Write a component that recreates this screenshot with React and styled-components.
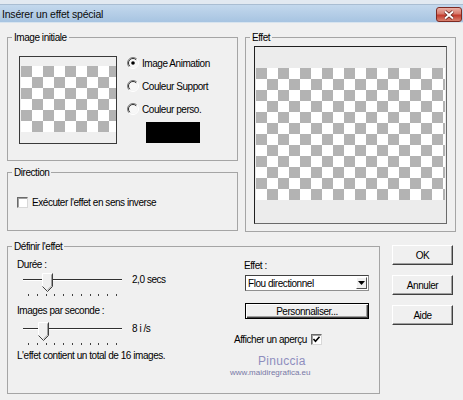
import React from 'react'
import styled, { createGlobalStyle } from 'styled-components'

const GlobalStyle = createGlobalStyle`
html, body {
    margin:0;
    padding:0;
    background:#f0f0f0;
}
body {
    font-family:"Liberation Sans", Arial, sans-serif;
    font-size:10px;
    letter-spacing:-0.45px;
    color:#000;
}
`

function Radio({ checked }) {
    return (
        <svg width="12" height="12" viewBox="0 0 12 12">
            <circle cx="6" cy="6" r="4.5" fill="#f7f7f7" />
            <path d="M9.9 2.1 A5.5 5.5 0 0 0 2.1 9.9" stroke="#808080" fill="none" />
            <path d="M9.2 2.8 A4.5 4.5 0 0 0 2.8 9.2" stroke="#303030" fill="none" />
            <path d="M9.9 2.1 A5.5 5.5 0 0 1 2.1 9.9" stroke="#ffffff" fill="none" />
            {checked && <circle cx="6" cy="6" r="1.8" fill="#000" />}
        </svg>
    )
}

function CheckBox({ checked }) {
    return (
        <Box>
            {checked && (
                <svg width="9" height="9" viewBox="0 0 9 9">
                    <path d="M1.5 4 L3.5 6.2 L7.5 1.8" stroke="#000" strokeWidth="1.6" fill="none" />
                </svg>
            )}
        </Box>
    )
}

function Slider({ pos }) {
    return (
        <SliderBox>
            <Track />
            <Thumb style={{ left: pos }}>
                <svg width="11" height="19" viewBox="0 0 11 19">
                    <path d="M0.5 0.5 H10.5 V13.5 L5.5 18.5 L0.5 13.5 Z" fill="#f0f0f0" />
                    <path d="M0.5 13.5 V0.5 H10" stroke="#ffffff" fill="none" />
                    <path d="M10.5 0.5 V13.5 L5.5 18.5 L0.5 13.5" stroke="#404040" fill="none" />
                    <path d="M9.5 1.5 V13 L5.5 17" stroke="#a0a0a0" fill="none" />
                </svg>
            </Thumb>
            <Ticks>
                {Array.from({ length: 11 }).map((_, i) => <Tick key={i} />)}
            </Ticks>
        </SliderBox>
    )
}

export default function App() {
    return (
        <>
            <GlobalStyle />
            <Window>
                <TitleBar>
                    <Title>Insérer un effet spécial</Title>
                    <CloseBtn>
                        <svg width="12" height="10" viewBox="0 0 12 10">
                            <path d="M2 1.5 L10 8.5 M10 1.5 L2 8.5" stroke="#5a1a14" strokeWidth="3.4" />
                            <path d="M2 1.5 L10 8.5 M10 1.5 L2 8.5" stroke="#ffffff" strokeWidth="2" />
                        </svg>
                    </CloseBtn>
                </TitleBar>
                <Body>
                    <TopRow>
                        <LeftCol>
                            <Group>
                                <Legend>Image initiale</Legend>
                                <ImageContent>
                                    <SmallPreview>
                                        <Checker $h={66} />
                                    </SmallPreview>
                                    <RadioCol>
                                        <RadioRow><Radio checked />Image Animation</RadioRow>
                                        <RadioRow><Radio />Couleur Support</RadioRow>
                                        <RadioRow><Radio />Couleur perso.</RadioRow>
                                        <Swatch />
                                    </RadioCol>
                                </ImageContent>
                            </Group>
                            <Group>
                                <Legend>Direction</Legend>
                                <DirectionContent>
                                    <CheckRow><CheckBox />Exécuter l'effet en sens inverse</CheckRow>
                                </DirectionContent>
                            </Group>
                        </LeftCol>
                        <Group>
                            <Legend>Effet</Legend>
                            <EffectContent>
                                <BigPreview>
                                    <Checker $h={132} />
                                </BigPreview>
                            </EffectContent>
                        </Group>
                    </TopRow>
                    <BottomRow>
                        <Group>
                            <Legend>Définir l'effet</Legend>
                            <DefineContent>
                                <LeftPane>
                                    <Label $top={5}>Durée :</Label>
                                    <SliderRow $top={1}>
                                        <Slider pos={19} />
                                        <Value>2,0 secs</Value>
                                    </SliderRow>
                                    <Label $top={8}>Images par seconde :</Label>
                                    <SliderRow $top={4}>
                                        <Slider pos={15} />
                                        <Value>8 i /s</Value>
                                    </SliderRow>
                                    <Label $top={4}>L'effet contient un total de 16 images.</Label>
                                </LeftPane>
                                <RightPane>
                                    <Label $top={6} $left={10}>Effet :</Label>
                                    <Select>
                                        <SelectText>Flou directionnel</SelectText>
                                        <SelectArrow>
                                            <svg width="7" height="4" viewBox="0 0 7 4">
                                                <path d="M0 0 H7 L3.5 4 Z" fill="#000" />
                                            </svg>
                                        </SelectArrow>
                                    </Select>
                                    <CustomBtn>Personnaliser...</CustomBtn>
                                    <PreviewRow>Afficher un aperçu<CheckBox checked /></PreviewRow>
                                    <Watermark>
                                        <Signature>Pinuccia</Signature>
                                        <Site>www.maidiregrafica.eu</Site>
                                    </Watermark>
                                </RightPane>
                            </DefineContent>
                        </Group>
                        <ButtonCol>
                            <Button>OK</Button>
                            <Button>Annuler</Button>
                            <Button>Aide</Button>
                        </ButtonCol>
                    </BottomRow>
                </Body>
            </Window>
        </>
    )
}

const Window = styled.div`
width:463px;
height:400px;
overflow:hidden;
background:#f0f0f0;
display:flex;
flex-direction:column;
`

const TitleBar = styled.div`
height:23px;
flex:none;
display:flex;
align-items:flex-start;
background:linear-gradient(to bottom, #e2e9f1 0, #e2e9f1 4px, #a9bdd2 4px, #a9bdd2 5px, #c3d8ed 5px, #a7c4e1 22px, #d8e4ef 22px);
`

const Title = styled.div`
font-family:"Liberation Sans", Arial, sans-serif;
font-size:10.5px;
letter-spacing:-0.2px;
line-height:13px;
margin:8px 0 0 2px;
color:#0b0b0b;
`

const CloseBtn = styled.div`
margin:7px 1px 0 auto;
width:24px;
height:13px;
border:1px solid #7d2a22;
border-radius:3px;
display:flex;
align-items:center;
justify-content:center;
background:linear-gradient(to bottom, #eab0a6 0%, #d77a6c 45%, #c23a2c 55%, #d9826f 100%);
`

const Body = styled.div`
padding:8px 7px 0;
display:flex;
flex-direction:column;
gap:8px;
`

const TopRow = styled.div`
display:grid;
grid-template-columns:231px 211px;
gap:7px;
`

const LeftCol = styled.div`
display:flex;
flex-direction:column;
gap:5px;
`

const Group = styled.fieldset`
margin:0;
padding:0;
min-width:0;
border:1px solid #a5a5a5;
`

const Legend = styled.legend`
padding:0 2px;
margin-left:4px;
line-height:13px;
font-size:10px;
`

const ImageContent = styled.div`
display:flex;
padding:12px 0 16px 11px;
gap:10px;
`

const SmallPreview = styled.div`
width:95px;
height:77px;
border:1px solid #3a3a3a;
padding:9px 0 0 1px;
box-sizing:content-box;
background:#efefef;
`

const Checker = styled.div`
height:${p => p.$h}px;
background:conic-gradient(#fff 25%, #b3b3b3 0 50%, #fff 0 75%, #b3b3b3 0);
background-size:22px 22px;
`

const RadioCol = styled.div`
display:flex;
flex-direction:column;
gap:9px;
`

const RadioRow = styled.div`
display:flex;
align-items:center;
gap:3px;
height:14px;
`

const Swatch = styled.div`
width:54px;
height:21px;
background:#000;
margin:-3px 0 0 19px;
`

const DirectionContent = styled.div`
padding:17px 0 21px 9px;
`

const CheckRow = styled.div`
display:flex;
align-items:center;
gap:4px;
height:13px;
`

const Box = styled.span`
width:9px;
height:9px;
display:flex;
align-items:center;
justify-content:center;
background:#fff;
border:1px solid;
border-color:#6a6a6a #d8d8d8 #d8d8d8 #6a6a6a;
box-shadow:inset 1px 1px 0 #a0a0a0;
`

const EffectContent = styled.div`
padding:2px 8px 7px;
`

const BigPreview = styled.div`
height:155px;
border:1px solid;
border-color:#202020 #6a6a6a #6a6a6a #202020;
padding:21px 1px 0;
background:#ececec;
`

const BottomRow = styled.div`
display:grid;
grid-template-columns:373px 61px;
gap:12px;
`

const DefineContent = styled.div`
display:flex;
height:140px;
`

const LeftPane = styled.div`
width:217px;
padding-left:9px;
display:flex;
flex-direction:column;
`

const Label = styled.div`
line-height:13px;
margin-top:${p => p.$top || 0}px;
margin-left:${p => p.$left || 0}px;
white-space:nowrap;
`

const SliderRow = styled.div`
display:flex;
align-items:flex-start;
margin-top:${p => p.$top}px;
`

const SliderBox = styled.div`
position:relative;
width:99px;
height:24px;
margin-left:6px;
padding-top:7px;
box-sizing:border-box;
`

const Track = styled.div`
height:1px;
background:#303030;
border-bottom:1px solid #ffffff;
`

const Thumb = styled.div`
position:absolute;
top:1px;
width:11px;
height:19px;
line-height:0;
`

const Ticks = styled.div`
margin-top:13px;
padding:0 5px;
display:flex;
justify-content:space-between;
`

const Tick = styled.span`
width:1px;
height:2px;
background:#404040;
`

const Value = styled.div`
margin:1px 0 0 10px;
line-height:13px;
`

const RightPane = styled.div`
width:136px;
display:flex;
flex-direction:column;
`

const Select = styled.div`
margin:3px 0 0 11px;
width:124px;
height:16px;
box-sizing:border-box;
display:flex;
align-items:center;
background:#fff;
border:1px solid;
border-color:#404040 #909090 #909090 #404040;
`

const SelectText = styled.div`
flex:1;
padding-left:2px;
line-height:13px;
`

const SelectArrow = styled.div`
width:11px;
height:12px;
margin-right:1px;
box-sizing:border-box;
display:flex;
align-items:center;
justify-content:center;
background:#f0f0f0;
border:1px solid;
border-color:#fff #505050 #505050 #fff;
`

const Button = styled.div`
height:20px;
box-sizing:border-box;
display:flex;
align-items:center;
justify-content:center;
background:#f0f0f0;
border:1px solid;
border-color:#ffffff #404040 #404040 #ffffff;
box-shadow:inset -1px -1px 0 #a0a0a0;
`

const CustomBtn = styled(Button)`
margin:12px 0 0 11px;
width:124px;
height:16px;
border-color:#000;
box-shadow:inset 1px 1px 0 #fff, inset -1px -1px 0 #404040, inset -2px -2px 0 #a0a0a0;
`

const PreviewRow = styled.div`
margin-top:14px;
display:flex;
align-items:center;
gap:4px;
height:13px;
`

const Watermark = styled.div`
margin:8px 0 0 -4px;
display:flex;
flex-direction:column;
align-items:flex-start;
`

const Signature = styled.div`
margin-left:28px;
font-size:12px;
letter-spacing:0.3px;
line-height:14px;
color:#8e8ebe;
`

const Site = styled.div`
font-size:8px;
letter-spacing:0;
line-height:10px;
color:#7878a6;
`

const ButtonCol = styled.div`
padding-top:5px;
display:flex;
flex-direction:column;
gap:10px;
`
